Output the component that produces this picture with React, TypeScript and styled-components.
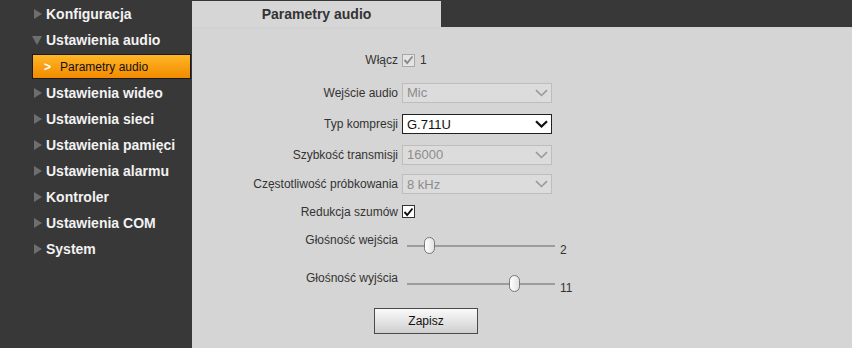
import styled, { createGlobalStyle } from "styled-components";

const GlobalStyle = createGlobalStyle`
  html, body {
    margin: 0;
    padding: 0;
    background: #383838;
  }
  body {
    font-family: "Liberation Sans", Arial, sans-serif;
  }
`;

const Page = styled.div`
  display: grid;
  grid-template-columns: 192px 1fr;
  width: 852px;
  height: 348px;
  overflow: hidden;
  background: #383838;
`;

/* sidebar */
const Sidebar = styled.ul`
  list-style: none;
  margin: 0;
  padding: 1px 0 0 0;
`;

const MenuItem = styled.li`
  display: flex;
  align-items: center;
  height: 26px;
  padding-left: 34px;
  gap: 4px;
  color: #f2f2f2;
  font-size: 14px;
  font-weight: bold;
`;

const Arrow = styled.span<{ $open?: boolean }>`
  width: 0;
  height: 0;
  ${(p) =>
    p.$open
      ? `border-left: 5px solid transparent;
         border-right: 5px solid transparent;
         border-top: 9px solid #6e6e6e;
         margin-left: -2px;`
      : `border-top: 5px solid transparent;
         border-bottom: 5px solid transparent;
         border-left: 8px solid #6e6e6e;`}
`;

const SubItem = styled.li`
  display: flex;
  align-items: center;
  gap: 9px;
  height: 25px;
  margin: 1px 1px 1px 32px;
  padding-left: 11px;
  box-sizing: border-box;
  border: 1px solid #1a1a1a;
  background: linear-gradient(#ffb626, #f28b00);
  color: #111;
  font-size: 12px;
`;

const Chevron = styled.span`
  color: #fff;
  font-weight: bold;
  font-size: 12px;
`;

/* content */
const Content = styled.div`
  display: flex;
  flex-direction: column;
`;

const TabBar = styled.div`
  height: 26px;
  margin-top: 1px;
  display: flex;
`;

const Tab = styled.div`
  width: 249px;
  background: #d7d6d6;
  color: #333;
  font-size: 14px;
  font-weight: bold;
  display: flex;
  align-items: center;
  justify-content: center;
`;

const Panel = styled.div`
  flex: 1;
  background: #d6d5d5;
  border-top: 2px solid #d3d2d2;
  padding-top: 15px;
`;

const Row = styled.div<{ $h: number }>`
  display: grid;
  grid-template-columns: 206px 1fr;
  column-gap: 4px;
  align-items: center;
  height: ${(p) => p.$h}px;
`;

const Label = styled.div<{ $up?: number }>`
  text-align: right;
  font-size: 12px;
  color: #333;
  white-space: nowrap;
  margin-top: ${(p) => (p.$up ? -p.$up : 0)}px;
`;

const Field = styled.div`
  display: flex;
  align-items: center;
  gap: 5px;
  font-size: 12px;
  color: #333;
`;

const Select = styled.div<{ $disabled?: boolean }>`
  width: 150px;
  height: 20px;
  box-sizing: border-box;
  display: flex;
  align-items: center;
  justify-content: space-between;
  padding: 0 3px 0 4px;
  font-size: 13px;
  background: ${(p) => (p.$disabled ? "#dddcdc" : "#fff")};
  border: 1px solid ${(p) => (p.$disabled ? "#bdbdbd" : "#222")};
  color: ${(p) => (p.$disabled ? "#8c8c8c" : "#111")};
`;

const Box = styled.span<{ $disabled?: boolean }>`
  width: 13px;
  height: 13px;
  box-sizing: border-box;
  display: inline-flex;
  align-items: center;
  justify-content: center;
  background: ${(p) => (p.$disabled ? "#e4e4e4" : "#fff")};
  border: 1px solid ${(p) => (p.$disabled ? "#a8a8a8" : "#333")};
`;

const SliderWrap = styled.div`
  display: flex;
  align-items: flex-end;
  gap: 5px;
  margin-top: 8px;
  margin-left: 5px;
`;

const Track = styled.div`
  position: relative;
  width: 148px;
  height: 18px;
  &::before {
    content: "";
    position: absolute;
    left: 0;
    right: 0;
    top: 8px;
    height: 2px;
    background: #9c9c9c;
  }
`;

const Thumb = styled.span`
  position: absolute;
  top: 0;
  width: 11px;
  height: 17px;
  box-sizing: border-box;
  margin-left: -5px;
  border: 1px solid #777;
  border-radius: 6px;
  background: linear-gradient(90deg, #fff, #e2e2e2);
`;

const SliderValue = styled.span`
  font-size: 12px;
  color: #333;
  line-height: 12px;
  margin-bottom: -1px;
`;

const Button = styled.button`
  margin-left: 182px;
  width: 104px;
  height: 26px;
  font-family: inherit;
  font-size: 12px;
  color: #111;
  border: 1px solid #4a4a4a;
  background: linear-gradient(#fafafa, #cfcfcf);
  padding: 0;
`;

const ButtonRow = styled.div`
  display: flex;
  align-items: center;
  height: 40px;
`;

function ChevronDown({ disabled }: { disabled?: boolean }) {
  return (
    <svg width="13" height="8" viewBox="0 0 13 8">
      <path
        d="M1 1.2 L6.5 6.5 L12 1.2"
        fill="none"
        stroke={disabled ? "#9a9a9a" : "#111"}
        strokeWidth={disabled ? 1.6 : 2.2}
      />
    </svg>
  );
}

function Check({ disabled }: { disabled?: boolean }) {
  return (
    <svg width="11" height="10" viewBox="0 0 11 10">
      <path
        d="M1.5 5 L4.2 8 L9.5 1.5"
        fill="none"
        stroke={disabled ? "#8a8a8a" : "#111"}
        strokeWidth="1.9"
      />
    </svg>
  );
}

function Slider({ value, max }: { value: number; max: number }) {
  const x = 3 + (value / max) * 142;
  return (
    <SliderWrap>
      <Track>
        <Thumb style={{ left: x }} />
      </Track>
      <SliderValue>{value}</SliderValue>
    </SliderWrap>
  );
}

const menu = [
  "Konfiguracja",
  "Ustawienia audio",
  "Ustawienia wideo",
  "Ustawienia sieci",
  "Ustawienia pamięci",
  "Ustawienia alarmu",
  "Kontroler",
  "Ustawienia COM",
  "System",
];

function App() {
  return (
    <>
      <GlobalStyle />
      <Page>
        <Sidebar>
          {menu.map((m) => (
            <>
              <MenuItem key={m}>
                <Arrow $open={m === "Ustawienia audio"} />
                {m}
              </MenuItem>
              {m === "Ustawienia audio" && (
                <SubItem key="sub">
                  <Chevron>&gt;</Chevron>
                  Parametry audio
                </SubItem>
              )}
            </>
          ))}
        </Sidebar>
        <Content>
          <TabBar>
            <Tab>Parametry audio</Tab>
          </TabBar>
          <Panel>
            <Row $h={32}>
              <Label>Włącz</Label>
              <Field>
                <Box $disabled>
                  <Check disabled />
                </Box>
                1
              </Field>
            </Row>
            <Row $h={33}>
              <Label>Wejście audio</Label>
              <Field>
                <Select $disabled>
                  Mic
                  <ChevronDown disabled />
                </Select>
              </Field>
            </Row>
            <Row $h={30}>
              <Label>Typ kompresji</Label>
              <Field>
                <Select>
                  G.711U
                  <ChevronDown />
                </Select>
              </Field>
            </Row>
            <Row $h={31}>
              <Label>Szybkość transmisji</Label>
              <Field>
                <Select $disabled>
                  16000
                  <ChevronDown disabled />
                </Select>
              </Field>
            </Row>
            <Row $h={28}>
              <Label>Częstotliwość próbkowania</Label>
              <Field>
                <Select $disabled>
                  8 kHz
                  <ChevronDown disabled />
                </Select>
              </Field>
            </Row>
            <Row $h={27}>
              <Label>Redukcja szumów</Label>
              <Field>
                <Box>
                  <Check />
                </Box>
              </Field>
            </Row>
            <Row $h={34}>
              <Label $up={4}>Głośność wejścia</Label>
              <Slider value={2} max={15} />
            </Row>
            <Row $h={42}>
              <Label $up={4}>Głośność wyjścia</Label>
              <Slider value={11} max={15} />
            </Row>
            <ButtonRow>
              <Button>Zapisz</Button>
            </ButtonRow>
          </Panel>
        </Content>
      </Page>
    </>
  );
}

export default App;
